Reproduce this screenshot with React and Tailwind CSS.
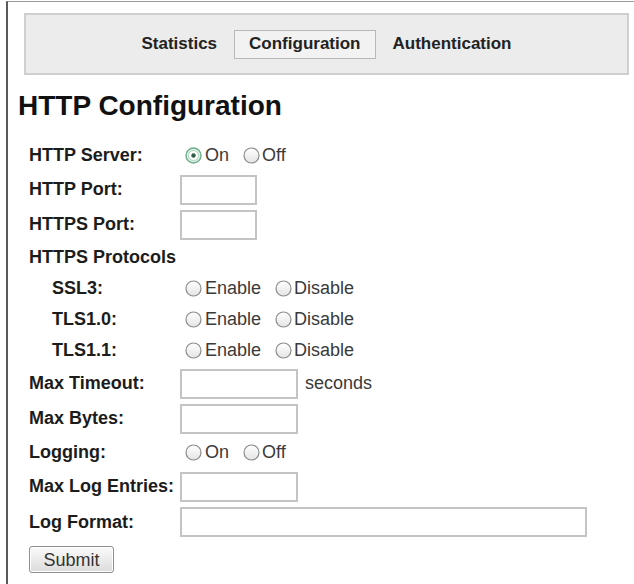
import { useState } from 'react';

const font = { fontFamily: '"Liberation Sans", Arial, sans-serif' };

function Radio({ checked, onClick }) {
  return (
    <svg width="17" height="17" viewBox="0 0 17 17" onClick={onClick} className="shrink-0 cursor-pointer">
      <defs>
        <linearGradient id="rb" x1="0" y1="0" x2="0" y2="1">
          <stop offset="0" stopColor="#ffffff" />
          <stop offset="1" stopColor="#e4e4e4" />
        </linearGradient>
      </defs>
      {checked ? (
        <>
          <circle cx="8.5" cy="8.5" r="7.5" fill="#dff0e6" stroke="#6fae8c" strokeWidth="1.4" />
          <circle cx="8.5" cy="8.5" r="5" fill="#ffffff" stroke="#a8d4bc" strokeWidth="1" />
          <circle cx="8.5" cy="8.5" r="2.2" fill="#2f5c44" />
        </>
      ) : (
        <circle cx="8.5" cy="8.5" r="7.5" fill="url(#rb)" stroke="#8c8c8c" strokeWidth="1.2" />
      )}
    </svg>
  );
}

function RadioPair({ a, b, value, onChange }) {
  return (
    <div className="ml-[5px] flex items-center text-[18px] text-[#3a3a3a]">
      <Radio checked={value === a} onClick={() => onChange(a)} />
      <span className="ml-[3px]">{a}</span>
      <span className="ml-[14px]" />
      <Radio checked={value === b} onClick={() => onChange(b)} />
      <span className="ml-[2px]">{b}</span>
    </div>
  );
}

function Row({ label, h, sub, children }) {
  return (
    <div className={`flex items-center ${h}`}>
      <div className={`w-[151px] shrink-0 font-bold text-[18px] text-[#1c1c1c] whitespace-nowrap ${sub ? 'pl-[23px]' : ''}`}>
        {label}
      </div>
      {children}
    </div>
  );
}

function TextBox({ w }) {
  return <input type="text" className={`${w} h-[30px] border-2 border-[#c4c4c4] bg-white outline-none px-1 text-[16px]`} />;
}

export default function App() {
  const [server, setServer] = useState('On');
  const [ssl3, setSsl3] = useState('');
  const [tls10, setTls10] = useState('');
  const [tls11, setTls11] = useState('');
  const [logging, setLogging] = useState('');

  return (
    <div className="min-h-screen bg-white pt-[1px]" style={font}>
      <div className="ml-[6px] min-h-[583px] border-l-2 border-[#5a5a5a] border-t border-t-[#9a9a9a] pl-[16px] pr-[5px] pt-[11px]">
        <nav className="h-[62px] flex items-center justify-center gap-[17px] bg-[#ececec] border-2 border-[#cfcfcf] text-[17px] font-bold text-[#222]">
          <span className="cursor-pointer">Statistics</span>
          <span className="h-[29px] flex items-center px-[14px] border border-[#b8b8b8] bg-[#f2f2f2] cursor-pointer">
            Configuration
          </span>
          <span className="cursor-pointer">Authentication</span>
        </nav>

        <h1 className="ml-[-6px] mt-[17px] text-[28px] leading-[28px] font-bold text-[#111]">HTTP Configuration</h1>

        <form className="mt-[19px] pl-[5px]" onSubmit={e => e.preventDefault()}>
          <Row label="HTTP Server:" h="h-[33px]">
            <RadioPair a="On" b="Off" value={server} onChange={setServer} />
          </Row>
          <Row label="HTTP Port:" h="h-[35px]">
            <TextBox w="w-[77px]" />
          </Row>
          <Row label="HTTPS Port:" h="h-[35px]">
            <TextBox w="w-[77px]" />
          </Row>
          <Row label="HTTPS Protocols" h="h-[31px]" />
          <Row label="SSL3:" h="h-[31px]" sub>
            <RadioPair a="Enable" b="Disable" value={ssl3} onChange={setSsl3} />
          </Row>
          <Row label="TLS1.0:" h="h-[31px]" sub>
            <RadioPair a="Enable" b="Disable" value={tls10} onChange={setTls10} />
          </Row>
          <Row label="TLS1.1:" h="h-[31px]" sub>
            <RadioPair a="Enable" b="Disable" value={tls11} onChange={setTls11} />
          </Row>
          <Row label="Max Timeout:" h="h-[35px]">
            <TextBox w="w-[118px]" />
            <span className="ml-[7px] text-[18px] text-[#3a3a3a]">seconds</span>
          </Row>
          <Row label="Max Bytes:" h="h-[35px]">
            <TextBox w="w-[118px]" />
          </Row>
          <Row label="Logging:" h="h-[33px]">
            <RadioPair a="On" b="Off" value={logging} onChange={setLogging} />
          </Row>
          <Row label="Max Log Entries:" h="h-[35px]">
            <TextBox w="w-[118px]" />
          </Row>
          <Row label="Log Format:" h="h-[36px]">
            <TextBox w="w-[407px]" />
          </Row>
          <button
            type="submit"
            className="mt-[6px] h-[27px] w-[85px] rounded-[3px] border border-[#8e8e8e] bg-gradient-to-b from-[#fafafa] to-[#dcdcdc] text-[18px] text-[#333] shadow-[inset_0_0_0_1px_#fff]"
          >
            Submit
          </button>
        </form>
      </div>
    </div>
  );
}
